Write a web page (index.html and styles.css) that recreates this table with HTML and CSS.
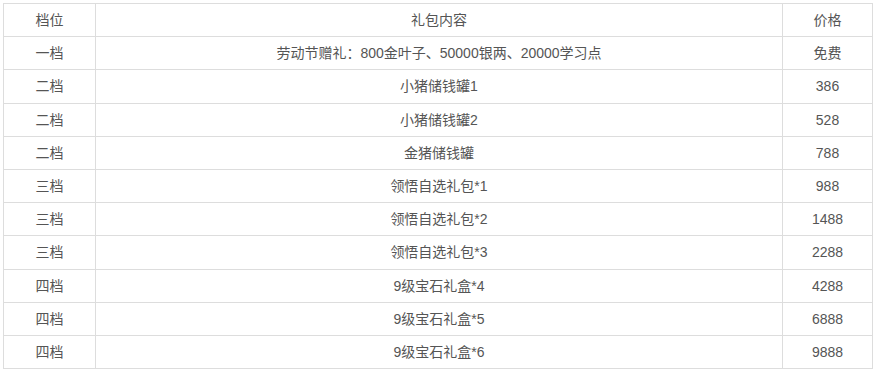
FILE: index.html
```html
<!DOCTYPE html>
<html lang="zh">
<head>
<meta charset="utf-8">
<title>礼包</title>
<link rel="stylesheet" href="styles.css">
</head>
<body>
<table class="gift">
  <colgroup>
    <col class="c1"><col class="c2"><col class="c3">
  </colgroup>
  <tbody>
    <tr><td>档位</td><td>礼包内容</td><td>价格</td></tr>
    <tr><td>一档</td><td>劳动节赠礼：800金叶子、50000银两、20000学习点</td><td>免费</td></tr>
    <tr><td>二档</td><td>小猪储钱罐1</td><td>386</td></tr>
    <tr><td>二档</td><td>小猪储钱罐2</td><td>528</td></tr>
    <tr><td>二档</td><td>金猪储钱罐</td><td>788</td></tr>
    <tr><td>三档</td><td>领悟自选礼包*1</td><td>988</td></tr>
    <tr><td>三档</td><td>领悟自选礼包*2</td><td>1488</td></tr>
    <tr><td>三档</td><td>领悟自选礼包*3</td><td>2288</td></tr>
    <tr><td>四档</td><td>9级宝石礼盒*4</td><td>4288</td></tr>
    <tr><td>四档</td><td>9级宝石礼盒*5</td><td>6888</td></tr>
    <tr><td>四档</td><td>9级宝石礼盒*6</td><td>9888</td></tr>
  </tbody>
</table>
</body>
</html>
```
FILE: styles.css
```css
html, body {
  margin: 0;
  padding: 0;
  background: #fff;
}
body {
  padding: 3px 0 0 3px;
  font-family: "Liberation Sans", "Noto Sans CJK SC", sans-serif;
  font-size: 14px;
  color: #555;
}
.gift {
  border-collapse: collapse;
  width: 870px;
  table-layout: fixed;
}
.gift .c1 { width: 92px; }
.gift .c3 { width: 90px; }
.gift td {
  border: 1px solid #ddd;
  text-align: center;
  height: 33.2px;
  padding: 0 6px;
  line-height: 20px;
  box-sizing: border-box;
  vertical-align: middle;
  white-space: nowrap;
}
```
